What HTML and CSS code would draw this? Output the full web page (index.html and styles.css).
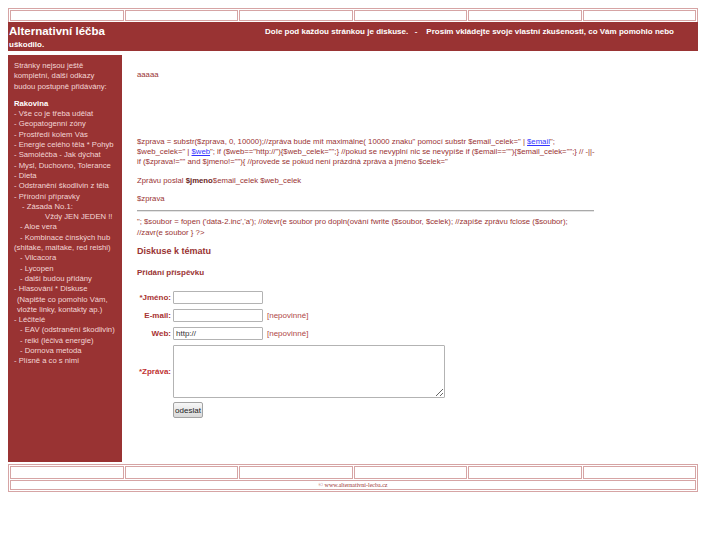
FILE: index.html
```html
<!DOCTYPE html>
<html lang="cs">
<head>
<meta charset="utf-8">
<title>Alternativní léčba</title>
<link rel="stylesheet" href="styles.css">
</head>
<body>
<div class="page">
  <div class="nav top">
    <span class="cell"></span><span class="cell"></span><span class="cell"></span><span class="cell"></span><span class="cell"></span><span class="cell"></span>
  </div>
  <div class="header"><span class="title">Alternativní léčba</span><span class="note">Dole pod každou stránkou je diskuse.&nbsp;&nbsp; -&nbsp;&nbsp;&nbsp; Prosím vkládejte svoje vlastní zkušenosti, co Vám pomohlo nebo uškodilo.</span></div>
  <div class="layout">
    <div class="side">
      <p class="intro">Stránky nejsou ještě<br>kompletní, další odkazy<br>budou postupně přidávány:</p>
      <ul class="menu">
        <li class="head">Rakovina</li>
        <li>- Vše co je třeba udělat</li>
        <li>- Geopatogenní zóny</li>
        <li>- Prostředí kolem Vás</li>
        <li>- Energie celého těla * Pohyb</li>
        <li>- Samoléčba - Jak dýchat</li>
        <li>- Mysl, Duchovno, Tolerance</li>
        <li>- Dieta</li>
        <li>- Odstranění škodlivin z těla</li>
        <li>- Přírodní přípravky</li>
        <li class="i2b">- Zásada No.1:</li>
        <li class="i3">Vždy JEN JEDEN !!</li>
        <li class="i2">- Aloe vera</li>
        <li class="i2">- Kombinace čínských hub</li>
        <li>(shitake, maitake, red reishi)</li>
        <li class="i2">- Vilcacora</li>
        <li class="i2">- Lycopen</li>
        <li class="i2">- další budou přidány</li>
        <li>- Hlasování * Diskuse</li>
        <li class="i1">(Napište co pomohlo Vám,</li>
        <li class="i1">vložte linky, kontakty ap.)</li>
        <li>- Léčitelé</li>
        <li class="i2">- EAV (odstranění škodlivin)</li>
        <li class="i2">- reiki (léčivá energie)</li>
        <li class="i2">- Dornova metoda</li>
        <li>- Plísně a co s nimi</li>
      </ul>
    </div>
    <div class="main">
      <p class="first">aaaaa</p>
      <p class="code">$zprava = substr($zprava, 0, 10000);//zpráva bude mít maximálne( 10000 znaku" pomocí substr $email_celek=" | <a href="#" class="link">$email</a>";<br>$web_celek=" | <a href="#" class="link">$web</a>"; if ($web=="http://"){$web_celek="";} //pokud se nevyplní nic se nevypíše if ($email==""){$email_celek="";} // -||-<br>if ($zprava!="" and $jmeno!=""){ //provede se pokud není prázdná zpráva a jméno $celek="</p>
      <p class="sent">Zprávu poslal <b class="name">$jmeno</b>$email_celek $web_celek</p>
      <p class="msg">$zprava</p>
      <hr class="rule">
      <p class="after">"; $soubor = fopen ('data-2.inc','a'); //otevr(e soubor pro dopln(ování fwrite ($soubor, $celek); //zapíše zprávu fclose ($soubor);<br>//zavr(e soubor } ?&gt;</p>
      <h2 class="h-disc">Diskuse k tématu</h2>
      <h3 class="h-add">Přidání příspěvku</h3>
      <form class="form" action="#">
        <label class="lbl">*Jméno:</label>
        <input class="inp" type="text">
        <span></span>
        <label class="lbl">E-mail:</label>
        <input class="inp" type="text">
        <span class="hint">[nepovinné]</span>
        <label class="lbl">Web:</label>
        <input class="inp" type="text" value="http://">
        <span class="hint">[nepovinné]</span>
        <label class="lbl lbl-msg">*Zpráva:</label>
        <textarea class="area"></textarea>
        <span></span>
        <button class="btn" type="button">odeslat</button>
      </form>
    </div>
  </div>
  <div class="foot">
    <div class="nav bottom">
      <span class="cell"></span><span class="cell"></span><span class="cell"></span><span class="cell"></span><span class="cell"></span><span class="cell"></span>
    </div>
    <div class="copy">© www.alternativni-lecba.cz</div>
  </div>
</div>
</body>
</html>
```

FILE: styles.css
```css
body {
  margin: 8px;
  background: #fff;
  color: #993333;
  font-family: "Liberation Sans", Arial, sans-serif;
  font-size: 8px;
}

.page {
  width: 690px;
}

.nav {
  display: grid;
  grid-template-columns: repeat(6, 1fr);
  gap: 1px;
  border: 1px solid #d6a4a4;
  padding: 1px;
}

.nav.top {
  border-bottom: 0;
}

.cell {
  display: block;
  height: 9px;
  border: 1px solid #d6a4a4;
}

.header {
  background: #993333;
  color: #fff;
  font-weight: bold;
  line-height: 13px;
  height: 26px;
  padding: 3px 1px 0;
  overflow: hidden;
}

.title {
  display: inline-block;
  width: 256px;
  font-size: 11.5px;
  line-height: 12px;
  vertical-align: -1px;
}

.layout {
  display: flex;
  margin-top: 4px;
  min-height: 407px;
}

.side {
  flex: none;
  width: 114px;
  box-sizing: border-box;
  background: #993333;
  color: #f3d6d6;
  padding: 6px 0 0 6px;
  font-size: 7.7px;
  line-height: 10.3px;
}

.intro {
  margin: 0;
}

.menu {
  list-style: none;
  margin: 7px 0 0;
  padding: 0;
}

.menu .head {
  font-weight: bold;
  color: #fff;
}

.menu .i1 { padding-left: 3px; }
.menu .i2 { padding-left: 6px; }
.menu .i2b { padding-left: 8px; }
.menu .i3 { padding-left: 31px; }

.main {
  width: 457px;
  padding: 15px 0 0 15px;
  font-size: 7.75px;
  line-height: 10.3px;
}

.main p {
  margin: 0;
}

.main .code {
  margin-top: 56.5px;
  white-space: nowrap;
}

.main .sent { margin-top: 8px; }
.main .msg { margin-top: 8px; }

.link {
  color: #3333ff;
  text-decoration: underline;
}

.name {
  color: #6a1f1f;
}

.rule {
  margin: 6px 0 0;
  border: 0;
  border-top: 1px solid #a9a9a9;
  border-bottom: 1px solid #e4e4e4;
  height: 0;
}

.main .after {
  margin-top: 5px;
  white-space: nowrap;
}

.h-disc {
  margin: 7.5px 0 0;
  font-size: 9px;
  line-height: 12px;
}

.h-add {
  margin: 10.5px 0 0;
  font-size: 8px;
  line-height: 10.3px;
}

.form {
  display: grid;
  grid-template-columns: 34px max-content 1fr;
  column-gap: 2px;
  row-gap: 5px;
  align-items: center;
  margin-top: 13px;
  font-size: 8px;
}

.lbl {
  text-align: right;
  font-weight: bold;
  color: #a83232;
}

.lbl-msg {
  color: #c03333;
}

.inp {
  width: 90px;
  height: 13px;
  box-sizing: border-box;
  margin: 0;
  padding: 0 2px;
  border: 1px solid #b3b3b3;
  border-radius: 1px;
  font: 8px "Liberation Sans", Arial, sans-serif;
  color: #333;
  background: #fff;
}

.hint {
  margin-left: 2px;
  color: #b04848;
}

.area {
  grid-column: 2 / 4;
  width: 272px;
  height: 53px;
  box-sizing: border-box;
  margin: 0;
  border: 1px solid #b3b3b3;
  border-radius: 1px;
  font: 8px "Liberation Sans", Arial, sans-serif;
}

.btn {
  grid-column: 2;
  justify-self: start;
  width: 30px;
  height: 16px;
  margin: -1px 0 0;
  padding: 0;
  border: 1px solid #a3a3a3;
  border-radius: 2px;
  background: linear-gradient(#f7f7f7, #d9d9d9);
  font: 8px "Liberation Sans", Arial, sans-serif;
  color: #222;
}

.foot {
  margin-top: 2px;
  border: 1px solid #d6a4a4;
  padding: 1px;
}

.foot .nav {
  border: 0;
  padding: 0;
}

.foot .cell {
  height: 11px;
}

.copy {
  margin-top: 1px;
  height: 8px;
  border: 1px solid #d6a4a4;
  font: 6px/8px "Liberation Serif", "Times New Roman", serif;
  text-align: center;
  color: #993333;
}
```
